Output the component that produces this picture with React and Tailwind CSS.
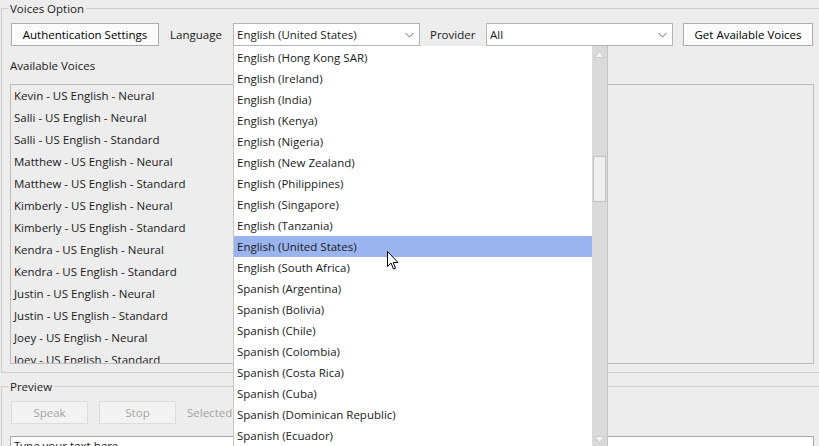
import React from "react";

const voices = [
  "Kevin - US English - Neural",
  "Salli - US English - Neural",
  "Salli - US English - Standard",
  "Matthew - US English - Neural",
  "Matthew - US English - Standard",
  "Kimberly - US English - Neural",
  "Kimberly - US English - Standard",
  "Kendra - US English - Neural",
  "Kendra - US English - Standard",
  "Justin - US English - Neural",
  "Justin - US English - Standard",
  "Joey - US English - Neural",
  "Joey - US English - Standard",
];

const languages = [
  "English (Hong Kong SAR)",
  "English (Ireland)",
  "English (India)",
  "English (Kenya)",
  "English (Nigeria)",
  "English (New Zealand)",
  "English (Philippines)",
  "English (Singapore)",
  "English (Tanzania)",
  "English (United States)",
  "English (South Africa)",
  "Spanish (Argentina)",
  "Spanish (Bolivia)",
  "Spanish (Chile)",
  "Spanish (Colombia)",
  "Spanish (Costa Rica)",
  "Spanish (Cuba)",
  "Spanish (Dominican Republic)",
  "Spanish (Ecuador)",
];

function Chevron() {
  return (
    <svg width="9" height="6" viewBox="0 0 9 6" className="shrink-0">
      <polyline points="0.5,1 4.5,5 8.5,1" fill="none" stroke="#6b6b6b" strokeWidth="1" />
    </svg>
  );
}

function Combo({ value, width }) {
  return (
    <div
      className={`h-[23px] ${width} bg-white border border-[#b4b4b4] flex items-center pl-[3px] pr-[5px]`}
    >
      <span className="flex-1 truncate">{value}</span>
      <Chevron />
    </div>
  );
}

function Button({ children, width, disabled }) {
  return (
    <div
      className={`h-[23px] ${width} flex items-center justify-center border ${
        disabled
          ? "border-[#dcdcdc] bg-[#f3f3f3] text-[#a3a3a3]"
          : "border-[#adadad] bg-[#fbfbfb] text-black"
      }`}
    >
      {children}
    </div>
  );
}

function Arrow({ down }) {
  return (
    <svg width="15" height="17" viewBox="0 0 15 17">
      <polygon
        points={down ? "2.5,5.5 12.5,5.5 7.5,11.5" : "2.5,11.5 12.5,11.5 7.5,5.5"}
        fill="#f5f5f5"
        stroke="#c9c9c9"
        strokeWidth="1"
      />
    </svg>
  );
}

export default function App() {
  return (
    <div className="relative w-[819px] h-[446px] overflow-hidden bg-[#ededed] text-[11.5px] leading-[16px] text-[#1a1a1a] font-['Open_Sans','Noto_Sans',sans-serif]">
      <fieldset className="ml-[1px] w-[840px] h-[373px] border border-[#cdcdcd]">
        <legend className="ml-[6px] px-[2px] pt-[2px] leading-[14px]">Voices Option</legend>
        <div className="mt-[7px] pl-[9px] flex items-center">
          <Button width="w-[148px]">Authentication Settings</Button>
          <div className="w-[74px] pl-[11px]">Language</div>
          <Combo value="English (United States)" width="w-[187px]" />
          <div className="w-[66px] pl-[10px]">Provider</div>
          <Combo value="All" width="w-[187px]" />
          <div className="ml-[10px]">
            <Button width="w-[130px]">Get Available Voices</Button>
          </div>
        </div>
        <div className="ml-[8px] mt-[12px]">Available Voices</div>
        <div className="ml-[8px] mt-[10px] w-[804px] h-[280px] border border-[#bcbcbc] overflow-hidden">
          {voices.map((v) => (
            <div key={v} className="h-[22px] pl-[3px] flex items-center">
              {v}
            </div>
          ))}
        </div>
      </fieldset>

      <fieldset className="ml-[1px] mt-[5px] w-[840px] h-[120px] border border-[#cdcdcd]">
        <legend className="ml-[6px] px-[2px] pt-[2px] leading-[14px]">Preview</legend>
        <div className="mt-[7px] pl-[9px] flex items-center gap-[11px]">
          <Button width="w-[77px]" disabled>
            Speak
          </Button>
          <Button width="w-[77px]" disabled>
            Stop
          </Button>
          <span className="text-[#a3a3a3]">Selected Voice:</span>
        </div>
        <div className="ml-[8px] mt-[12px] w-[804px] h-[40px] bg-white border border-[#a9a9a9] pl-[3px] pt-[1px]">
          Type your text here
        </div>
      </fieldset>

      {/* open language dropdown */}
      <div className="absolute left-[233px] top-[46px] w-[375px] h-[403px] bg-white border-x border-b border-[#c4c4c4] flex">
        <div className="flex-1 pt-[1px]">
          {languages.map((l) => (
            <div
              key={l}
              className={`h-[21px] pl-[3px] flex items-center ${
                l === "English (United States)" ? "bg-[#99b4ef]" : ""
              }`}
            >
              {l}
            </div>
          ))}
        </div>
        <div className="w-[15px] bg-[#dadada] flex flex-col">
          <Arrow />
          <div className="flex-1 pt-[93px] px-[1px]">
            <div className="h-[46px] bg-[#efefef] border border-[#c2c2c2]" />
          </div>
          <Arrow down />
        </div>
      </div>

      {/* mouse pointer */}
      <svg
        className="absolute left-[387px] top-[251px]"
        width="13"
        height="20"
        viewBox="0 0 13 20"
      >
        <path
          d="M0.5,0.5 L0.5,15.5 L4,12 L6.5,18 L8.5,17.2 L6.2,11.5 L11,11.5 Z"
          fill="#fff"
          stroke="#000"
          strokeWidth="1"
          strokeLinejoin="miter"
        />
      </svg>
    </div>
  );
}
